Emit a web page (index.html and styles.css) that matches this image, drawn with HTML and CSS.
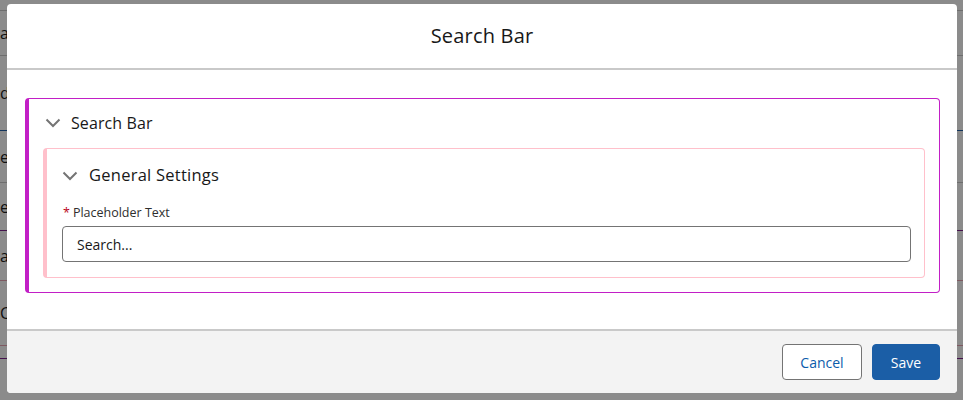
FILE: index.html
```html
<!DOCTYPE html>
<html lang="en">
<head>
<meta charset="utf-8">
<title>Search Bar</title>
<link rel="stylesheet" href="styles.css">
</head>
<body>
<div class="page">
  <div class="bg-row r1"><span class="frag">add</span></div>
  <div class="bg-row r2"><span class="frag">do</span></div>
  <div class="bg-row r3 blue"><span class="frag">edit</span></div>
  <div class="bg-row r4"><span class="frag">error</span></div>
  <div class="bg-row r5 purple"><span class="frag">all</span></div>
  <div class="bg-row r6 pinkline"><span class="frag">Cancel</span></div>
  <div class="bg-row r7 pinkline"></div>
  <div class="bg-row r8 purple"></div>
</div>
<div class="backdrop"></div>
<section class="modal" role="dialog" aria-labelledby="modal-title">
  <header class="modal-header">
    <h2 id="modal-title" class="modal-title">Search Bar</h2>
  </header>
  <div class="modal-body">
    <div class="panel panel-outer">
      <div class="panel-head">
        <svg class="chev" viewBox="0 0 16 10" width="16" height="10" aria-hidden="true"><path d="M1.5 1.5 L8 8 L14.5 1.5" fill="none" stroke="#747474" stroke-width="2"/></svg>
        <span class="panel-title">Search Bar</span>
      </div>
      <div class="panel panel-inner">
        <div class="panel-head inner-head">
          <svg class="chev" viewBox="0 0 16 10" width="16" height="10" aria-hidden="true"><path d="M1.5 1.5 L8 8 L14.5 1.5" fill="none" stroke="#747474" stroke-width="2"/></svg>
          <span class="panel-title title-lg">General Settings</span>
        </div>
        <div class="field">
          <label class="field-label" for="ph"><abbr class="req" title="required">*</abbr>Placeholder Text</label>
          <input id="ph" class="field-input" type="text" value="Search...">
        </div>
      </div>
    </div>
  </div>
  <footer class="modal-footer">
    <button class="btn btn-neutral" type="button">Cancel</button>
    <button class="btn btn-brand" type="button">Save</button>
  </footer>
</section>
</body>
</html>
```

FILE: styles.css
```css
* { box-sizing: border-box; }
html, body { margin: 0; padding: 0; }
body {
  width: 963px;
  height: 400px;
  overflow: hidden;
  font-family: "Open Sans", "Noto Sans", sans-serif;
  color: #181818;
  background: #ffffff;
  position: relative;
}
.page {
  display: flex;
  flex-direction: column;
  padding-top: 10px;
}
.bg-row {
  border-top: 1px solid #c9c9c9;
  display: flex;
  align-items: center;
  font-size: 16px;
  color: #181818;
}
.r1 { height: 45px; }
.r2 { height: 75px; }
.r3 { height: 52px; }
.r4 { height: 48px; }
.r5 { height: 50px; }
.r6 { height: 65px; }
.r7 { height: 13px; }
.r8 { height: 20px; }
.blue { border-top-color: #1b5ea6; }
.purple { border-top-color: #7b1e8a; }
.pinkline { border-top-color: #e7a1b0; }

.backdrop {
  position: absolute;
  inset: 0;
  background: rgba(8, 8, 8, 0.47);
}

.modal {
  position: absolute;
  left: 7px;
  top: 4px;
  width: 950px;
  height: 389px;
  background: #ffffff;
  border-radius: 4px;
  display: flex;
  flex-direction: column;
  overflow: hidden;
}
.modal-header {
  height: 66px;
  flex: none;
  border-bottom: 2px solid #c9c9c9;
  display: flex;
  align-items: center;
  justify-content: center;
}
.modal-title {
  margin: 0;
  font-size: 20px;
  font-weight: 400;
  color: #181818;
  line-height: 1.25;
  padding-bottom: 2px;
  letter-spacing: 0.2px;
}
.modal-body {
  flex: 1;
  padding: 28px 17px 0 18px;
}
.panel {
  border-radius: 4px;
  background: #ffffff;
}
.panel-outer {
  border: 1px solid #c21fc6;
  border-left-width: 4px;
  height: 195px;
  padding: 0 14px 14px 14px;
}
.panel-head {
  display: flex;
  align-items: center;
  height: 49px;
  padding-left: 2px;
  padding-bottom: 2px;
}
.chev { flex: none; margin-right: 10px; }
.panel-title {
  font-size: 16px;
  line-height: 1;
  color: #181818;
  letter-spacing: 0.1px;
}
.title-lg { font-size: 16.5px; letter-spacing: 0.25px; margin-left: 1px; }
.panel-inner {
  border: 1px solid #ffc0cb;
  border-left-width: 4px;
  height: 130px;
  padding: 0 13px 14px 15px;
}
.inner-head {
  height: 55px;
  padding-left: 0;
}
.field {
  display: flex;
  flex-direction: column;
}
.field-label {
  font-size: 12.5px;
  line-height: 18px;
  color: #2e2e2e;
  margin-left: 1px;
  margin-bottom: 4px;
  display: flex;
  align-items: center;
}
.req {
  color: #ba0517;
  text-decoration: none;
  border: 0;
  margin-right: 3px;
}
.field-input {
  height: 36px;
  border: 1px solid #747474;
  border-radius: 4px;
  padding: 0 14px;
  font-family: inherit;
  font-size: 14px;
  color: #181818;
  background: #ffffff;
  outline: none;
}
.modal-footer {
  flex: none;
  height: 64px;
  border-top: 2px solid #c9c9c9;
  background: #f3f3f3;
  display: flex;
  justify-content: flex-end;
  align-items: flex-start;
  gap: 10px;
  padding: 13px 17px 0 0;
}
.btn {
  height: 36px;
  border-radius: 4px;
  font-family: inherit;
  font-size: 14px;
  padding: 0 16px;
  cursor: pointer;
}
.btn-neutral {
  width: 80px;
  background: #ffffff;
  border: 1px solid #747474;
  color: #0b5cab;
}
.btn-brand {
  width: 68px;
  background: #1b5ea6;
  border: 1px solid #1b5ea6;
  color: #ffffff;
}
```
